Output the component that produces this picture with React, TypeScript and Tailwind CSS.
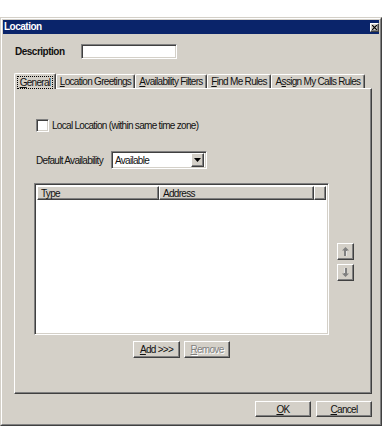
import React from 'react';

const font = { fontFamily: '"Liberation Sans", Arial, sans-serif' };

const raised =
  'border border-t-white border-l-white border-r-[#404040] border-b-[#404040] shadow-[inset_-1px_-1px_#808080] bg-[#d4d0c8]';
const sunken =
  'border border-t-[#808080] border-l-[#808080] border-r-white border-b-white shadow-[inset_1px_1px_#404040,inset_-1px_-1px_#d4d0c8]';

const U: React.FC<{ children: React.ReactNode }> = ({ children }) => <span className="underline underline-offset-[1px]">{children}</span>;

const Tab: React.FC<{ w: string; selected?: boolean; children: React.ReactNode }> = ({ w, selected, children }) => (
  <div
    className={`${w} ${
      selected ? 'h-[16px] z-10 -mb-[1px] pt-[1px]' : 'h-[14px]'
    } relative flex items-center justify-center bg-[#d4d0c8] border-t border-l border-r border-t-white border-l-white border-r-[#404040] shadow-[inset_-1px_0_#808080] rounded-t-[2px] whitespace-nowrap`}
  >
    {selected ? (
      <span className="border border-dotted border-black px-[2px] leading-[11px]">{children}</span>
    ) : (
      children
    )}
  </div>
);

const Btn: React.FC<{ w: string; h?: string; disabled?: boolean; children: React.ReactNode }> = ({ w, h = 'h-[17px]', disabled, children }) => (
  <div
    className={`${w} ${h} ${raised} flex items-center justify-center ${
      disabled ? 'text-[#808080] [text-shadow:1px_1px_0_#fff]' : 'text-[#111]'
    }`}
  >
    {children}
  </div>
);

const Arrow: React.FC<{ down?: boolean }> = ({ down }) => (
  <svg width="7" height="9" viewBox="0 0 7 9" className={down ? 'rotate-180' : ''}>
    <path d="M3.5 0 L7 3.5 H5 V9 H2 V3.5 H0 Z" fill="#808080" />
    <path d="M4.5 4 V9" stroke="#fff" strokeWidth="0.8" />
  </svg>
);

export default function App() {
  return (
    <div className="w-[382px] h-[426px] bg-white pt-[17px] text-[10px] tracking-[-0.7px] text-[#111]" style={font}>
      <div className="h-[409px] border border-t-[#d4d0c8] border-l-[#d4d0c8] border-r-[#404040] border-b-[#404040] bg-[#d4d0c8]">
        <div className="h-full border border-t-white border-l-white border-r-[#808080] border-b-[#808080] p-[1px] flex flex-col">
          {/* Title bar */}
          <div className="h-[14px] bg-[#0a246a] flex items-center justify-between pl-[1px]">
            <span className="text-white font-bold text-[10px] leading-none tracking-[-0.5px]">Location</span>
            <div className={`w-[9px] h-[9px] ${raised} flex items-center justify-center`}>
              <svg width="5" height="5" viewBox="0 0 5 5">
                <path d="M0 0 L5 5 M5 0 L0 5" stroke="#000" strokeWidth="1.2" />
              </svg>
            </div>
          </div>

          {/* Description */}
          <div className="flex items-center mt-[10px] pl-[12px] h-[15px]">
            <span className="w-[66px] font-bold tracking-[-0.5px]">Description</span>
            <div className={`w-[96px] h-[15px] bg-white ${sunken}`} />
          </div>

          {/* Tabs */}
          <div className="flex items-end ml-[11px] mt-[14px] h-[15px]">
            <Tab w="w-[42px]" selected>
              <U>G</U>eneral
            </Tab>
            <Tab w="w-[79px]">
              <U>L</U>ocation Greetings
            </Tab>
            <Tab w="w-[72px]">
              <U>A</U>vailability Filters
            </Tab>
            <Tab w="w-[64px]">
              <U>F</U>ind Me Rules
            </Tab>
            <Tab w="w-[94px]">
              A<U>s</U>sign My Calls Rules
            </Tab>
          </div>

          {/* Panel */}
          <div className="ml-[11px] w-[358px] h-[306px] border border-t-white border-l-white border-r-[#404040] border-b-[#404040] shadow-[inset_-1px_-1px_#808080] pl-[19px] pt-[30px]">
            <div className="flex items-center gap-[3px] ml-[2px] h-[13px]">
              <div className={`w-[13px] h-[13px] bg-white ${sunken}`} />
              <span>Local Location (within same time zone)</span>
            </div>

            <div className="flex items-center ml-[2px] mt-[19px] h-[18px]">
              <span className="w-[75px]">Default Availability</span>
              <div className={`w-[96px] h-[18px] bg-white ${sunken} flex items-center justify-between p-[2px]`}>
                <span className="pl-[1px]">Available</span>
                <div className={`w-[13px] h-[14px] ${raised} flex items-center justify-center`}>
                  <svg width="7" height="4" viewBox="0 0 7 4">
                    <path d="M0 0 H7 L3.5 4 Z" fill="#000" />
                  </svg>
                </div>
              </div>
            </div>

            <div className="flex mt-[14px]">
              <div className="flex flex-col">
                <div className={`w-[295px] h-[152px] bg-white ${sunken} p-[2px]`}>
                  <div className="flex h-[14px]">
                    <div className={`w-[122px] ${raised} pl-[3px] flex items-center`}>Type</div>
                    <div className={`w-[155px] ${raised} pl-[3px] flex items-center`}>Address</div>
                    <div className={`flex-1 ${raised}`} />
                  </div>
                </div>
                <div className="flex justify-center gap-[4px] mt-[6px]">
                  <Btn w="w-[47px]">
                    <U>A</U>dd &gt;&gt;&gt;
                  </Btn>
                  <Btn w="w-[46px]" disabled>
                    <U>R</U>emove
                  </Btn>
                </div>
              </div>
              <div className="flex flex-col gap-[4px] ml-[8px] mt-[60px]">
                <Btn w="w-[17px]">
                  <Arrow />
                </Btn>
                <Btn w="w-[17px]">
                  <Arrow down />
                </Btn>
              </div>
            </div>
          </div>

          {/* Footer */}
          <div className="flex justify-end gap-[5px] mr-[7px] mt-[7px]">
            <Btn w="w-[56px]" h="h-[16px]">
              <U>O</U>K
            </Btn>
            <Btn w="w-[56px]" h="h-[16px]">
              <U>C</U>ancel
            </Btn>
          </div>
        </div>
      </div>
    </div>
  );
}
